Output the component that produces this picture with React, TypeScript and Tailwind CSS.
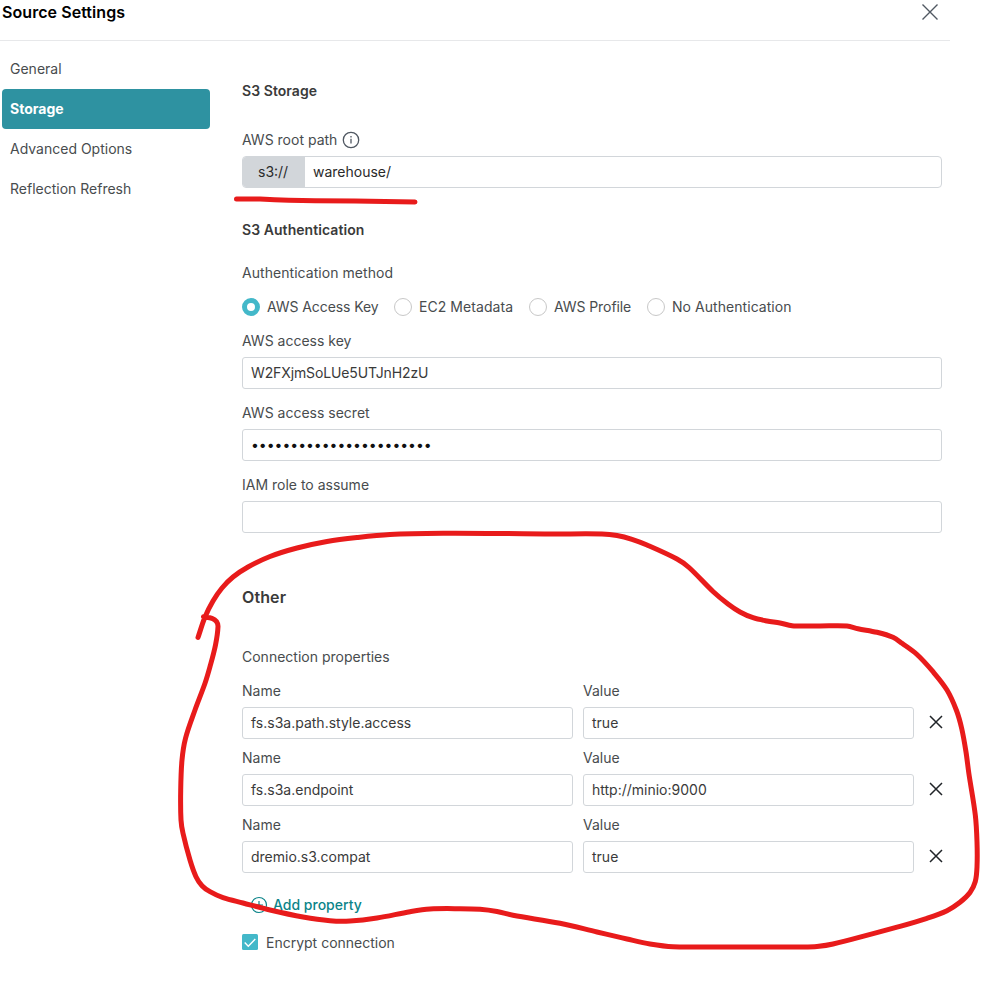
import React from "react";

type Point = [number, number];

const outline: Point[] = [
  [198, 637.5], [205, 617], [213, 601], [222, 588], [233, 577], [248, 567], [270, 556.5], [297, 548], [327, 541.5],
  [357, 537.5], [390, 534.5], [443, 533.3], [500, 533.5], [550, 534], [602, 534], [617, 535.5], [632, 539.3], [647, 545],
  [677, 559], [689, 567.5], [713, 591.5], [728, 604], [740, 612], [753, 617.7], [767, 621], [780, 623], [792, 625.8],
  [800, 626], [820, 626], [847, 626], [858, 628.7], [877, 632.3], [893, 637.3], [902, 643.3], [917, 654.5],
  [933, 671.7], [947, 690], [956.5, 710.5], [961.7, 728.5], [966, 752], [968.8, 773], [975.3, 815], [977, 842],
  [977, 867], [975.3, 881.5], [970, 892.5], [960, 902.3], [947, 910.7], [927, 918.3], [900, 926.3], [833, 944],
  [817, 946.5], [803, 947], [740, 947], [673, 946.7], [650, 944], [627, 939], [597, 932], [560, 923.3], [513, 915.3],
  [497, 911.5], [480, 909.3], [460, 908.7], [430, 909], [410, 911.7], [377, 918], [350, 921], [330, 920.7],
  [303, 917], [270, 910], [243, 903], [223, 897.7], [210, 891.7], [202, 885.7], [196, 876.7], [190, 860],
  [183, 833.3], [181, 820], [180.7, 790], [182, 760], [185.5, 738.3], [195, 710], [205, 683.3], [210, 666.7],
  [215.5, 645], [218, 626.7], [216.5, 621.5], [212, 618.3], [203.5, 616.8],
];

// Smooth hand-drawn stroke: a cubic segment between each pair of points.
function smooth(pts: Point[]) {
  let d = `M${pts[0][0]} ${pts[0][1]}`;
  for (let i = 0; i < pts.length - 1; i++) {
    const a = pts[Math.max(0, i - 1)];
    const b = pts[i];
    const c = pts[i + 1];
    const e = pts[Math.min(pts.length - 1, i + 2)];
    const len = Math.hypot(c[0] - b[0], c[1] - b[1]) / 3;
    const l1 = Math.hypot(c[0] - a[0], c[1] - a[1]) || 1;
    const l2 = Math.hypot(e[0] - b[0], e[1] - b[1]) || 1;
    d += `C${b[0] + ((c[0] - a[0]) / l1) * len} ${b[1] + ((c[1] - a[1]) / l1) * len} ${c[0] - ((e[0] - b[0]) / l2) * len} ${c[1] - ((e[1] - b[1]) / l2) * len} ${c[0]} ${c[1]}`;
  }
  return d;
}

function Field({ label, value }: { label: string; value: React.ReactNode }) {
  return (
    <label className="block flex-1">
      <span className="flex h-8 items-center">{label}</span>
      <span className="flex h-8 items-center rounded-[3px] border border-[#d2d6da] px-2 text-[#3a3a3a]">{value}</span>
    </label>
  );
}

function Radio({ label, checked, width }: { label: React.ReactNode; checked?: boolean; width: string }) {
  return (
    <span className={`flex items-center gap-[7px] whitespace-nowrap ${width}`}>
      <span className={`size-[18px] shrink-0 rounded-full ${checked ? "border-[5px] border-[#43b8c9]" : "border border-[#c8c8c8]"}`} />
      {label}
    </span>
  );
}

const properties = [
  ["fs.s3a.path.style.access", "true"],
  ["fs.s3a.endpoint", "http://minio:9000"],
  ["dremio.s3.compat", "true"],
];

export default function App() {
  return (
    <div className="relative h-[997px] w-[981px] overflow-hidden bg-white font-['Inter',sans-serif] text-[14px] leading-5 text-[#484c4e]">
      <header className="flex h-[41px] w-[950px] justify-between border-b border-[#e7e8ea] pl-[2px] pr-[12px]">
        <h1 className="mt-[2px] text-[16px] font-semibold tracking-[0.06px] text-black">Source Settings</h1>
        <svg className="mt-[4px]" width="16" height="16" viewBox="0 0 16 16" fill="none" stroke="#505862" strokeWidth="1.4">
          <path d="M.5.5l15 15M15.5.5l-15 15" />
        </svg>
      </header>
      <div className="flex">
        <nav className="ml-[2px] mt-2 w-52 shrink-0">
          {["General", "Storage", "Advanced Options", "Reflection Refresh"].map((t) => (
            <div key={t} className={`flex h-10 items-center rounded-[4px] px-2 ${t === "Storage" ? "bg-[#2e92a1] font-bold text-white" : ""}`}>{t}</div>
          ))}
        </nav>
        <main className="ml-8 w-[704px]">
          <div className="w-[700px]">
            <h2 className="mt-10 font-semibold tracking-[0.06px] text-[#3a3a3a]">S3 Storage</h2>
            <div className="mt-[23px] flex h-8 items-center gap-[5px]">
              AWS root path
              <svg width="18" height="18" viewBox="0 0 18 18" fill="none" stroke="#505862" strokeWidth="1.3">
                <circle cx="9" cy="9" r="7.7" />
                <path d="M9 7.8v4.7M9 5v1.4" />
              </svg>
            </div>
            <div className="flex h-8 overflow-hidden rounded-[4px] border border-[#d2d6da] text-[#2a2a2a]">
              <span className="flex w-[62px] items-center bg-[#d2d6da] pl-[15px]">s3://</span>
              <span className="flex items-center pl-2">warehouse/</span>
            </div>
            <h2 className="mt-8 font-semibold tracking-[0.06px] text-[#3a3a3a]">S3 Authentication</h2>
            <div className="mt-[23px] tracking-[0.05px]">Authentication method</div>
            <div className="mb-2 mt-[14px] flex h-5">
              <Radio label={<span className="tracking-[-0.08px]">AWS Access Key</span>} checked width="w-[152px]" />
              <Radio label={<span className="tracking-[0.06px]">EC2 Metadata</span>} width="w-[135px]" />
              <Radio label={<span className="tracking-[-0.08px]">AWS Profile</span>} width="w-[118px]" />
              <Radio label={<span className="tracking-[0.05px]">No Authentication</span>} width="w-[160px]" />
            </div>
            <div className="flex flex-col gap-2">
              <Field label="AWS access key" value={<span className="tracking-[-0.12px]">W2FXjmSoLUe5UTJnH2zU</span>} />
              <Field label="AWS access secret" value={<span className="tracking-[-0.02px] text-[#111]">•••••••••••••••••••••••</span>} />
              <Field label="IAM role to assume" value="" />
            </div>
            <h2 className="mt-[52px] text-[16px] font-semibold leading-6 tracking-[0.1px] text-[#3a3a3a]">Other</h2>
            <div className="mb-2 mt-[38px]">Connection properties</div>
          </div>
          <div className="flex flex-col gap-[3px]">
            {properties.map(([name, value]) => (
              <div key={name} className="flex items-end">
                <div className="flex w-[672px] gap-[10px]">
                  <Field label="Name" value={name} />
                  <Field label="Value" value={value} />
                </div>
                <svg className="mb-[10px] ml-[15px]" width="14" height="14" viewBox="0 0 14 14" fill="none" stroke="#202428" strokeWidth="1.5">
                  <path d="M1 1l12 12M13 1L1 13" />
                </svg>
              </div>
            ))}
          </div>
          <div className="ml-2 mt-[22px] flex h-5 items-center gap-[5px] font-medium text-[#0c8489]">
            <svg width="18" height="18" viewBox="0 0 18 18" fill="none" stroke="currentColor" strokeWidth="1.2">
              <circle cx="9" cy="9" r="7.5" />
              <path d="M9 5v8M5 9h8" />
            </svg>
            Add property
          </div>
          <div className="mt-[18px] flex h-5 items-center gap-2">
            <svg className="-mt-[2px]" width="16" height="16" viewBox="0 0 16 16" fill="none">
              <rect width="16" height="16" rx="1.5" fill="#43b8c9" />
              <path d="M2.7 8.5l3.6 3.7 7-7.3" stroke="white" strokeWidth="1.4" />
            </svg>
            Encrypt connection
          </div>
        </main>
      </div>
      <svg className="pointer-events-none absolute inset-0" width="981" height="997" viewBox="0 0 981 997" fill="none" stroke="#e81b1b" strokeWidth="5" strokeLinecap="round" strokeLinejoin="round">
        <path d="M236.5 199 L260 199 Q290 200.6 315 200.8 L355 201 L415 202" />
        <path d={smooth(outline)} />
      </svg>
    </div>
  );
}
